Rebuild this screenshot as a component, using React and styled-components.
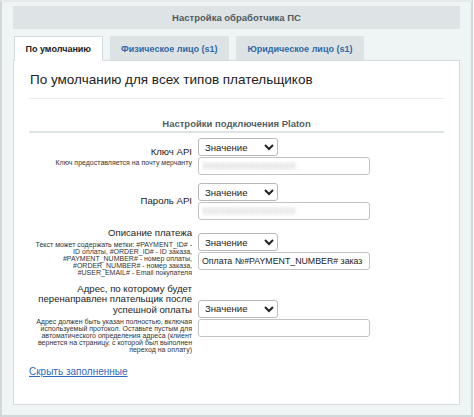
import React from 'react';
import styled, { createGlobalStyle } from 'styled-components';

const GlobalStyle = createGlobalStyle`
  html, body {
    margin: 0;
    padding: 0;
    background: #fff;
    font-family: "Liberation Sans", Arial, sans-serif;
  }
`;

const Frame = styled.div`
  box-sizing: border-box;
  width: 473px;
  height: 417px;
  background: #eff4f5;
  border: 2px solid #d2d8da;
  border-top: 2px solid #e6eaeb;
  padding: 4px 11px 0;
`;

const HeaderBar = styled.div`
  height: 23px;
  background: #dee3e5;
  display: flex;
  align-items: center;
  justify-content: center;
  font-size: 9.5px;
  font-weight: bold;
  color: #4f5b60;
  margin-bottom: 7px;
`;

const Tabs = styled.div`
  display: flex;
  gap: 7px;
  padding-left: 1px;
`;

const Tab = styled.div`
  box-sizing: border-box;
  padding: 0 10.5px;
  display: flex;
  align-items: center;
  font-size: 9px;
  font-weight: bold;
  color: ${p => (p.$active ? '#222' : '#2f68a8')};
  background: ${p => (p.$active ? '#fff' : '#dde3e5')};
  border: 1px solid ${p => (p.$active ? '#d4dadc' : '#dde3e5')};
  border-bottom: none;
  position: relative;
  z-index: ${p => (p.$active ? 2 : 0)};
  margin-bottom: ${p => (p.$active ? '-1px' : '0')};
  padding-bottom: ${p => (p.$active ? '1px' : '0')};
  height: ${p => (p.$active ? '25px' : '24px')};
`;

const Panel = styled.div`
  box-sizing: border-box;
  height: 345px;
  background: #fff;
  border: 1px solid #d6dcde;
  padding: 0 15px;
  position: relative;
  z-index: 1;
`;

const Heading = styled.div`
  font-size: 13.5px;
  color: #222;
  line-height: 16px;
  padding-top: 11px;
  padding-left: 1px;
`;

const Separator = styled.div`
  height: ${p => p.$thick ? '2px' : '1px'};
  background: ${p => p.$thick ? '#dde2e4' : '#e8ebec'};
`;

const SectionTitle = styled.div`
  text-align: center;
  font-size: 9.5px;
  font-weight: bold;
  color: #535f64;
  line-height: 11px;
  margin: 19px 0 2px;
`;

const Rows = styled.div`
  padding-top: 1px;
`;

const Row = styled.div`
  display: grid;
  grid-template-columns: 167px 1fr;
  column-gap: 2px;
  align-items: center;
  padding: 4px 0;
`;

const LabelCell = styled.div`
  text-align: right;
  padding-right: 4px;
  padding-left: 4px;
`;

const Label = styled.div`
  font-size: 9.6px;
  line-height: 10.5px;
  color: #222;
`;

const Hint = styled.div`
  font-size: 7px;
  line-height: 7px;
  color: #333;
  margin-top: ${p => p.$gap || 2}px;
`;

const Controls = styled.div`
  display: flex;
  flex-direction: column;
  gap: 1px;
  align-items: flex-start;
`;

const Select = styled.select`
  box-sizing: border-box;
  width: 80px;
  height: 18px;
  font-family: "Liberation Sans", Arial, sans-serif;
  font-size: 9.6px;
  color: #222;
  background: #fff;
  border: 1px solid #b9b9b9;
  border-radius: 3px;
  padding: 0 2px;
`;

const Input = styled.input`
  box-sizing: border-box;
  width: 172px;
  height: 18px;
  font-family: "Liberation Sans", Arial, sans-serif;
  font-size: 8.8px;
  color: #222;
  background: #fff;
  border: 1px solid #c3c3c3;
  border-radius: 3px;
  padding: 0 2px 0 3px;
  outline: none;
  ${p => p.$blurred && `
    color: transparent;
    text-shadow: 0 0 4px rgba(110, 110, 110, 0.5);
  `}
`;

const HideLink = styled.a`
  display: inline-block;
  margin-top: 9px;
  font-size: 10px;
  line-height: 12px;
  color: #3068bd;
  text-decoration: underline;
  cursor: pointer;
`;

const Field = ({ label, hint, value, blurred, hintGap }) => (
  <Row>
    <LabelCell>
      <Label>{label}</Label>
      {hint && <Hint $gap={hintGap}>{hint}</Hint>}
    </LabelCell>
    <Controls>
      <Select defaultValue="v">
        <option value="v">Значение</option>
      </Select>
      <Input defaultValue={value} $blurred={blurred} readOnly />
    </Controls>
  </Row>
);

export default function App() {
  return (
    <>
      <GlobalStyle />
      <Frame>
        <HeaderBar>Настройка обработчика ПС</HeaderBar>
        <Tabs>
          <Tab $active>По умолчанию</Tab>
          <Tab>Физическое лицо (s1)</Tab>
          <Tab>Юридическое лицо (s1)</Tab>
        </Tabs>
        <Panel>
          <Heading>По умолчанию для всех типов плательщиков</Heading>
          <Separator style={{ marginTop: 10 }} />
          <SectionTitle>Настройки подключения Platon</SectionTitle>
          <Separator $thick />
          <Rows>
            <Field
              label="Ключ API"
              hint="Ключ предоставляется на почту мерчанту"
              value="XXXXXXXXXXXXXXXX"
              blurred
            />
            <Field label="Пароль API" value="XXXXXXXXXXXXXXXX" blurred />
            <Field
              label="Описание платежа"
              hint="Текст может содержать метки: #PAYMENT_ID# - ID оплаты, #ORDER_ID# - ID заказа, #PAYMENT_NUMBER# - номер оплаты, #ORDER_NUMBER# - номер заказа, #USER_EMAIL# - Email покупателя"
              value="Оплата №#PAYMENT_NUMBER# заказ"
            />
            <Field
              label="Адрес, по которому будет перенаправлен плательщик после успешной оплаты"
              hint="Адрес должен быть указан полностью, включая используемый протокол. Оставьте пустым для автоматического определения адреса (клиент вернется на страницу, с которой был выполнен переход на оплату)"
              value=""
              hintGap={3}
            />
          </Rows>
          <HideLink>Скрыть заполненные</HideLink>
        </Panel>
      </Frame>
    </>
  );
}
